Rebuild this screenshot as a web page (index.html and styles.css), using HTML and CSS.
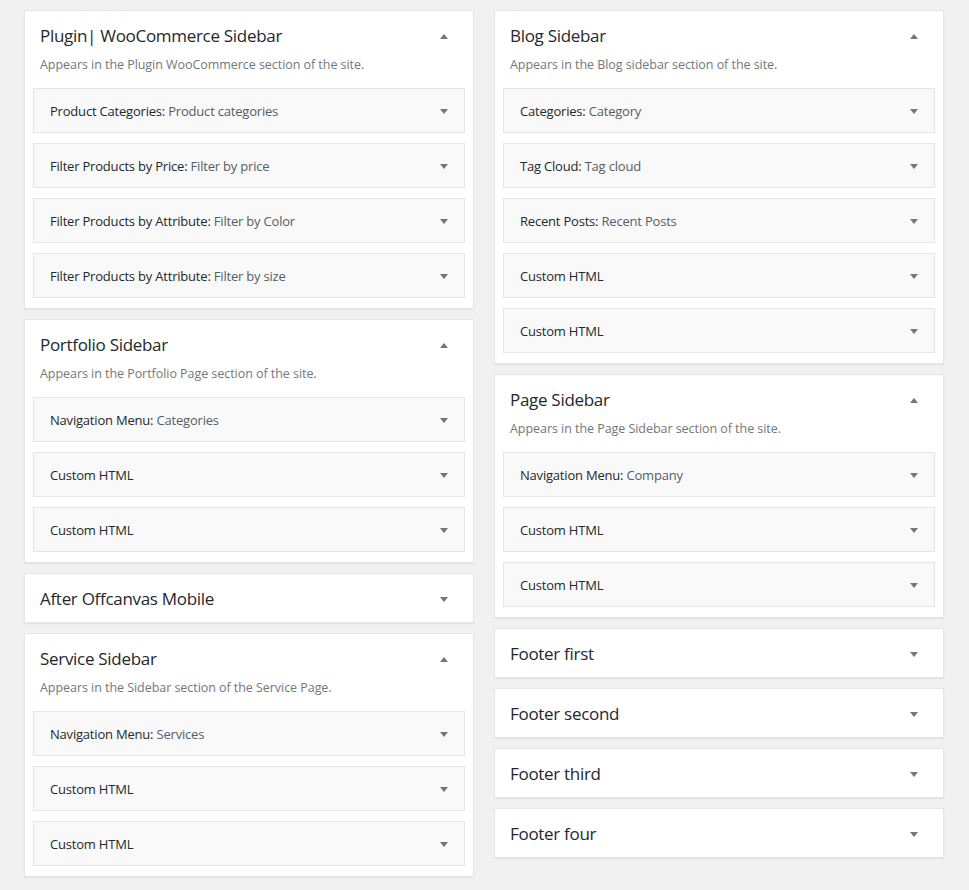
FILE: index.html
```html
<!DOCTYPE html>
<html lang="en">
<head>
<meta charset="utf-8">
<title>Widgets</title>
<link rel="stylesheet" href="styles.css">
</head>
<body>
<div class="columns">
  <div class="column">
    <section class="area open">
      <div class="area-head"><h2>Plugin| WooCommerce Sidebar</h2><span class="tri up"></span></div>
      <p class="area-desc">Appears in the Plugin WooCommerce section of the site.</p>
      <div class="widget"><span class="w-name">Product Categories:<span class="w-sub"> Product categories</span></span><span class="tri down"></span></div>
      <div class="widget"><span class="w-name">Filter Products by Price:<span class="w-sub"> Filter by price</span></span><span class="tri down"></span></div>
      <div class="widget"><span class="w-name">Filter Products by Attribute:<span class="w-sub"> Filter by Color</span></span><span class="tri down"></span></div>
      <div class="widget"><span class="w-name">Filter Products by Attribute:<span class="w-sub"> Filter by size</span></span><span class="tri down"></span></div>
    </section>
    <section class="area open">
      <div class="area-head"><h2>Portfolio Sidebar</h2><span class="tri up"></span></div>
      <p class="area-desc">Appears in the Portfolio Page section of the site.</p>
      <div class="widget"><span class="w-name">Navigation Menu:<span class="w-sub"> Categories</span></span><span class="tri down"></span></div>
      <div class="widget"><span class="w-name">Custom HTML</span><span class="tri down"></span></div>
      <div class="widget"><span class="w-name">Custom HTML</span><span class="tri down"></span></div>
    </section>
    <section class="area">
      <div class="area-head"><h2>After Offcanvas Mobile</h2><span class="tri down"></span></div>
    </section>
    <section class="area open">
      <div class="area-head"><h2>Service Sidebar</h2><span class="tri up"></span></div>
      <p class="area-desc">Appears in the Sidebar section of the Service Page.</p>
      <div class="widget"><span class="w-name">Navigation Menu:<span class="w-sub"> Services</span></span><span class="tri down"></span></div>
      <div class="widget"><span class="w-name">Custom HTML</span><span class="tri down"></span></div>
      <div class="widget"><span class="w-name">Custom HTML</span><span class="tri down"></span></div>
    </section>
  </div>
  <div class="column">
    <section class="area open">
      <div class="area-head"><h2>Blog Sidebar</h2><span class="tri up"></span></div>
      <p class="area-desc">Appears in the Blog sidebar section of the site.</p>
      <div class="widget"><span class="w-name">Categories:<span class="w-sub"> Category</span></span><span class="tri down"></span></div>
      <div class="widget"><span class="w-name">Tag Cloud:<span class="w-sub"> Tag cloud</span></span><span class="tri down"></span></div>
      <div class="widget"><span class="w-name">Recent Posts:<span class="w-sub"> Recent Posts</span></span><span class="tri down"></span></div>
      <div class="widget"><span class="w-name">Custom HTML</span><span class="tri down"></span></div>
      <div class="widget"><span class="w-name">Custom HTML</span><span class="tri down"></span></div>
    </section>
    <section class="area open">
      <div class="area-head"><h2>Page Sidebar</h2><span class="tri up"></span></div>
      <p class="area-desc">Appears in the Page Sidebar section of the site.</p>
      <div class="widget"><span class="w-name">Navigation Menu:<span class="w-sub"> Company</span></span><span class="tri down"></span></div>
      <div class="widget"><span class="w-name">Custom HTML</span><span class="tri down"></span></div>
      <div class="widget"><span class="w-name">Custom HTML</span><span class="tri down"></span></div>
    </section>
    <section class="area">
      <div class="area-head"><h2>Footer first</h2><span class="tri down"></span></div>
    </section>
    <section class="area">
      <div class="area-head"><h2>Footer second</h2><span class="tri down"></span></div>
    </section>
    <section class="area">
      <div class="area-head"><h2>Footer third</h2><span class="tri down"></span></div>
    </section>
    <section class="area">
      <div class="area-head"><h2>Footer four</h2><span class="tri down"></span></div>
    </section>
  </div>
</div>
</body>
</html>
```
FILE: styles.css
```css
* { box-sizing: border-box; }
html, body { margin: 0; padding: 0; }
body {
  background: #f1f1f1;
  font-family: "Open Sans", "Noto Sans", sans-serif;
  color: #23282d;
  width: 969px;
  height: 890px;
  overflow: hidden;
}
.columns {
  display: flex;
  gap: 20px;
  padding: 10px 0 0 24px;
}
.column {
  width: 450px;
  display: flex;
  flex-direction: column;
  gap: 10px;
}
.area {
  background: #fff;
  border: 1px solid #e5e5e5;
  box-shadow: 0 1px 1px rgba(0,0,0,0.05);
}
.area.open { padding-bottom: 10px; }
.area-head {
  display: flex;
  align-items: center;
  justify-content: space-between;
  padding: 16px 25px 14px 15px;
}
.area.open .area-head { padding-bottom: 11px; }
.area-head h2 {
  margin: 0;
  font-size: 17px;
  line-height: 18px;
  font-weight: 500;
  letter-spacing: -0.3px;
  color: #23282d;
}
.area-desc {
  margin: 0 15px 14px;
  font-size: 12.5px;
  line-height: 18px;
  color: #72777c;
  letter-spacing: -0.05px;
}
.widget {
  margin: 0 8px 10px;
  height: 45px;
  background: #f9f9f9;
  border: 1px solid #e5e5e5;
  display: flex;
  align-items: center;
  justify-content: space-between;
  padding: 1px 16px 0 16px;
}
.widget:last-child { margin-bottom: 0; }
.w-name {
  font-size: 13px;
  letter-spacing: -0.2px;
  font-weight: 500;
  color: #23282d;
}
.w-sub {
  font-weight: 400;
  color: #555d66;
}
.tri {
  width: 0;
  height: 0;
  border-left: 4px solid transparent;
  border-right: 4px solid transparent;
}
.tri.down { border-top: 5px solid #72777c; }
.tri.up { border-bottom: 5px solid #72777c; }
```
